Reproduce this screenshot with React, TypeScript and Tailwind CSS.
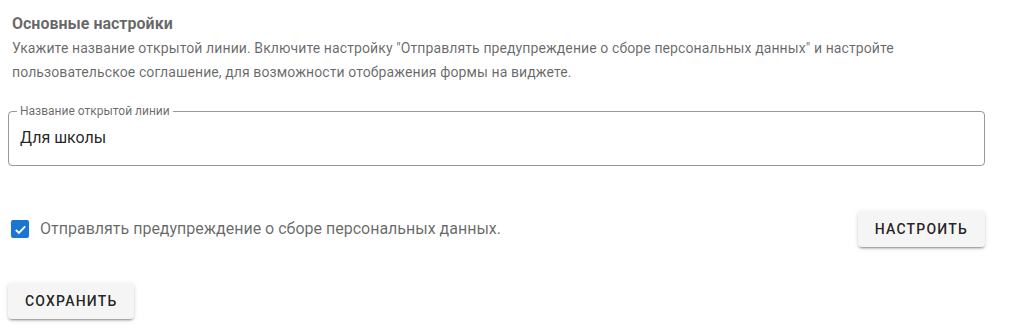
export default function App() {
  return (
    <div className="w-[1011px] h-[332px] bg-white font-['Roboto',sans-serif] overflow-hidden">
      <div className="px-2 pt-[12px]">
        {/* Heading */}
        <div className="px-1 pt-[2px]">
          <h2 className="text-[16px] font-bold leading-[20px] text-[rgba(0,0,0,0.6)]">
            Основные настройки
          </h2>
          <p className="mt-[2px] text-[14px] tracking-[0.1px] leading-[24px] text-[rgba(0,0,0,0.6)] pr-[40px]">
            Укажите название открытой линии. Включите настройку "Отправлять предупреждение о сборе
            персональных данных" и настройте пользовательское соглашение, для возможности
            отображения формы на виджете.
          </p>
        </div>

        {/* Text field */}
        <fieldset className="mt-[21px] w-[977px] h-[61px] border border-[rgba(0,0,0,0.4)] rounded-[4px] px-[8px]">
          <legend className="px-[3px] text-[12px] leading-[12px] text-[rgba(0,0,0,0.6)]">
            Название открытой линии
          </legend>
          <div className="px-[3px] pt-[11px] text-[16px] leading-[20px] text-[rgba(0,0,0,0.87)]">
            Для школы
          </div>
        </fieldset>

        {/* Checkbox row */}
        <div className="mt-[45px] w-[977px] flex items-center justify-between">
          <label className="flex items-center gap-[11px] pl-[3px]">
            <span className="w-[18px] h-[18px] rounded-[2px] bg-[#1976d2] flex items-center justify-center">
              <svg viewBox="0 0 24 24" className="w-[15px] h-[15px]" fill="none" stroke="white" strokeWidth="3">
                <path d="M4.5 12.5l5 5L19.5 7" />
              </svg>
            </span>
            <span className="text-[16px] leading-[24px] text-[rgba(0,0,0,0.6)]">
              Отправлять предупреждение о сборе персональных данных.
            </span>
          </label>
          <button className="h-[36px] px-[17px] rounded-[4px] bg-[#f5f5f5] text-[14px] font-medium tracking-[1.2px] uppercase text-[rgba(0,0,0,0.87)] shadow-[0_3px_1px_-2px_rgba(0,0,0,0.2),0_2px_2px_0_rgba(0,0,0,0.14),0_1px_5px_0_rgba(0,0,0,0.12)]">
            Настроить
          </button>
        </div>

        {/* Save */}
        <div className="mt-[36px]">
          <button className="h-[36px] px-[17px] rounded-[4px] bg-[#f5f5f5] text-[14px] font-medium tracking-[1.2px] uppercase text-[rgba(0,0,0,0.87)] shadow-[0_3px_1px_-2px_rgba(0,0,0,0.2),0_2px_2px_0_rgba(0,0,0,0.14),0_1px_5px_0_rgba(0,0,0,0.12)]">
            Сохранить
          </button>
        </div>
      </div>
    </div>
  );
}
